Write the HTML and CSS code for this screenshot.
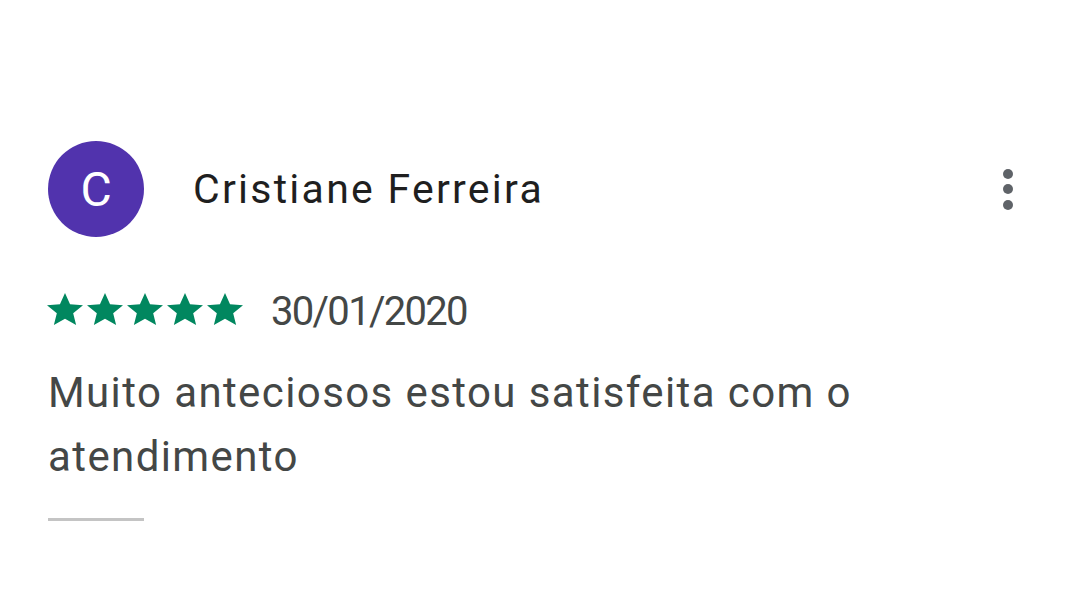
FILE: index.html
```html
<!DOCTYPE html>
<html lang="pt">
<head>
<meta charset="utf-8">
<link rel="stylesheet" href="styles.css">
</head>
<body>
<article class="review">
  <header class="review-head">
    <div class="avatar">C</div>
    <div class="name">Cristiane Ferreira</div>
    <button class="more" aria-label="Mais opções">
      <span class="dot"></span><span class="dot"></span><span class="dot"></span>
    </button>
  </header>
  <div class="meta">
    <div class="stars">
      <svg class="star" viewBox="2 2 20 19" preserveAspectRatio="none"><path d="M12 17.27L18.18 21l-1.64-7.03L22 9.24l-7.19-.61L12 2 9.19 8.63 2 9.24l5.46 4.73L5.82 21z"/></svg>
      <svg class="star" viewBox="2 2 20 19" preserveAspectRatio="none"><path d="M12 17.27L18.18 21l-1.64-7.03L22 9.24l-7.19-.61L12 2 9.19 8.63 2 9.24l5.46 4.73L5.82 21z"/></svg>
      <svg class="star" viewBox="2 2 20 19" preserveAspectRatio="none"><path d="M12 17.27L18.18 21l-1.64-7.03L22 9.24l-7.19-.61L12 2 9.19 8.63 2 9.24l5.46 4.73L5.82 21z"/></svg>
      <svg class="star" viewBox="2 2 20 19" preserveAspectRatio="none"><path d="M12 17.27L18.18 21l-1.64-7.03L22 9.24l-7.19-.61L12 2 9.19 8.63 2 9.24l5.46 4.73L5.82 21z"/></svg>
      <svg class="star" viewBox="2 2 20 19" preserveAspectRatio="none"><path d="M12 17.27L18.18 21l-1.64-7.03L22 9.24l-7.19-.61L12 2 9.19 8.63 2 9.24l5.46 4.73L5.82 21z"/></svg>
    </div>
    <span class="date">30/01/2020</span>
  </div>
  <p class="text">Muito anteciosos estou satisfeita com o atendimento</p>
  <div class="divider"></div>
</article>
</body>
</html>
```
FILE: styles.css
```css
html, body {
  margin: 0;
  padding: 0;
  background: #ffffff;
}
body {
  font-family: Roboto, "Liberation Sans", sans-serif;
  width: 1080px;
  height: 601px;
  overflow: hidden;
}
.review {
  padding: 141px 48px 0 48px;
}
.review-head {
  display: flex;
  align-items: center;
  height: 96px;
}
.avatar {
  width: 96px;
  height: 96px;
  border-radius: 50%;
  background: #5133ad;
  color: #ffffff;
  font-size: 48px;
  display: flex;
  align-items: center;
  justify-content: center;
  flex: none;
}
.name {
  margin-left: 49px;
  font-size: 41px;
  color: #1f1f1f;
  letter-spacing: 2.25px;
  flex: 1;
}
.more {
  width: 48px;
  height: 48px;
  border: 0;
  background: transparent;
  padding: 0;
  display: flex;
  flex-direction: column;
  align-items: center;
  justify-content: center;
  gap: 5.5px;
}
.dot {
  width: 10px;
  height: 10px;
  border-radius: 50%;
  background: #5f6368;
}
.meta {
  display: flex;
  align-items: center;
  margin-top: 56px;
  height: 32px;
}
.stars {
  display: flex;
  gap: 4px;
  margin-left: -1px;
}
.star {
  width: 36px;
  height: 32px;
  fill: #01875f;
  display: block;
}
.date {
  margin-left: 28px;
  font-size: 40px;
  letter-spacing: -1.7px;
  color: #444746;
  position: relative;
  top: 2px;
}
.text {
  margin: 36px 0 0 0;
  font-size: 42px;
  line-height: 64px;
  letter-spacing: 1.4px;
  color: #444746;
  width: 900px;
}
.divider {
  margin-top: 29px;
  width: 96px;
  height: 3px;
  background: #c4c4c4;
}
```
